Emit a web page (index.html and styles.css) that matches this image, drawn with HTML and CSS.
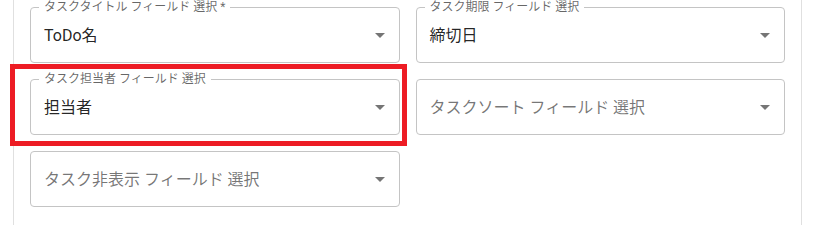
FILE: index.html
```html
<!DOCTYPE html>
<html lang="ja">
<head>
<meta charset="utf-8">
<link rel="stylesheet" href="styles.css">
</head>
<body>
<div class="panel">
  <div class="grid">
    <div class="field">
      <span class="flabel">タスクタイトル フィールド 選択 *</span>
      <span class="value">ToDo名</span>
      <svg class="arrow" viewBox="0 0 24 24"><path d="M7 10l5 5 5-5z"/></svg>
    </div>
    <div class="field">
      <span class="flabel">タスク期限 フィールド 選択</span>
      <span class="value">締切日</span>
      <svg class="arrow" viewBox="0 0 24 24"><path d="M7 10l5 5 5-5z"/></svg>
    </div>
    <div class="field">
      <span class="flabel">タスク担当者 フィールド 選択</span>
      <span class="value">担当者</span>
      <svg class="arrow" viewBox="0 0 24 24"><path d="M7 10l5 5 5-5z"/></svg>
    </div>
    <div class="field">
      <span class="value placeholder">タスクソート フィールド 選択</span>
      <svg class="arrow" viewBox="0 0 24 24"><path d="M7 10l5 5 5-5z"/></svg>
    </div>
    <div class="field">
      <span class="value placeholder">タスク非表示 フィールド 選択</span>
      <svg class="arrow" viewBox="0 0 24 24"><path d="M7 10l5 5 5-5z"/></svg>
    </div>
  </div>
  <div class="highlight"></div>
</div>
</body>
</html>
```

FILE: styles.css
```css
* { box-sizing: border-box; }
html, body { margin: 0; padding: 0; background: #fff; }
body {
  font-family: Roboto, "Noto Sans CJK JP", sans-serif;
  width: 814px;
  height: 225px;
  overflow: hidden;
}
.panel {
  position: relative;
  margin-left: 13px;
  width: 789px;
  height: 225px;
  border-left: 1px solid #e0e0e0;
  border-right: 1px solid #e0e0e0;
  padding: 7px 16px 0 16px;
}
.grid {
  display: grid;
  grid-template-columns: 1fr 1fr;
  column-gap: 16px;
  row-gap: 16px;
}
.field {
  position: relative;
  height: 56px;
  border: 1px solid #c4c4c4;
  border-radius: 4px;
  display: flex;
  align-items: center;
  padding: 0 7px 0 13px;
}
.flabel {
  position: absolute;
  top: -8px;
  left: 8px;
  padding: 0 5px;
  background: #fff;
  font-size: 12px;
  line-height: 14px;
  color: rgba(0, 0, 0, 0.6);
  white-space: nowrap;
}
.value {
  flex: 1;
  font-size: 16px;
  line-height: 23px;
  color: rgba(0, 0, 0, 0.87);
  white-space: nowrap;
}
.value.placeholder {
  color: rgba(0, 0, 0, 0.55);
}
.arrow {
  width: 24px;
  height: 24px;
  fill: rgba(0, 0, 0, 0.54);
  flex: none;
}
.highlight {
  position: absolute;
  left: -4px;
  top: 64px;
  width: 397px;
  height: 82px;
  border: 5px solid #ed1c24;
}
```
